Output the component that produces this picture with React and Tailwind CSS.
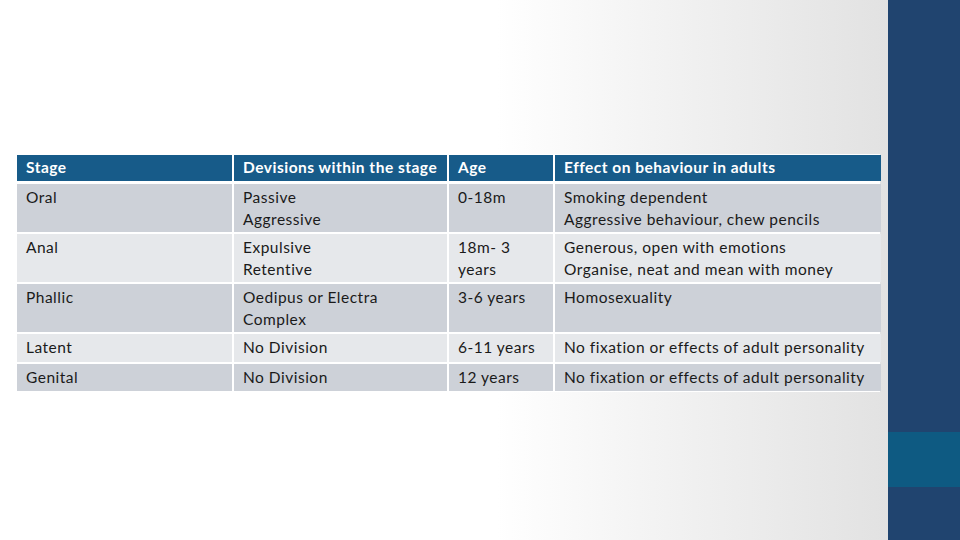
const rows = [
  { stage: "Oral", div: ["Passive", "Aggressive"], age: ["0-18m"], effect: ["Smoking dependent", "Aggressive behaviour, chew pencils"], tall: true },
  { stage: "Anal", div: ["Expulsive", "Retentive"], age: ["18m- 3", "years"], effect: ["Generous, open with emotions", "Organise, neat and mean with money"], tall: true },
  { stage: "Phallic", div: ["Oedipus or Electra", "Complex"], age: ["3-6 years"], effect: ["Homosexuality"], tall: true },
  { stage: "Latent", div: ["No Division"], age: ["6-11 years"], effect: ["No fixation or effects of adult personality"] },
  { stage: "Genital", div: ["No Division"], age: ["12 years"], effect: ["No fixation or effects of adult personality"] },
];

function Cell({ lines, shade, tall, last }) {
  return (
    <div
      className={`${shade} ${tall ? "h-[48px]" : last ? "h-[27px]" : "h-[28px]"} pl-[9px] pt-[3px] leading-[21.5px]`}
    >
      {lines.map((l) => (
        <div key={l}>{l}</div>
      ))}
    </div>
  );
}

export default function App() {
  return (
    <div className="w-[960px] h-[540px] flex overflow-hidden text-[15.5px] tracking-[0.5px] text-[#1a1a1a]" style={{ fontFamily: "Lato, 'Open Sans', sans-serif" }}>
      <div className="w-[888px] h-full bg-[linear-gradient(90deg,#ffffff_0%,#ffffff_56%,#f4f4f4_72%,#e2e2e2_100%)]">
        <div className="ml-[16px] mt-[154px] w-[864px] bg-white p-[1px]">
          <div className="grid grid-cols-[215px_213px_104px_326px] gap-x-[2px]">
            <div className="bg-[#175b89] h-[26px] pl-[9px] flex items-center font-bold text-white">Stage</div>
            <div className="bg-[#175b89] h-[26px] pl-[9px] flex items-center font-bold text-white">Devisions within the stage</div>
            <div className="bg-[#175b89] h-[26px] pl-[9px] flex items-center font-bold text-white">Age</div>
            <div className="bg-[#175b89] h-[26px] pl-[9px] flex items-center font-bold text-white">Effect on behaviour in adults</div>
          </div>
          <div className="h-[3px]" />
          <div className="flex flex-col gap-y-[2px]">
            {rows.map((r, i) => {
              const shade = i % 2 === 0 ? "bg-[#cdd1d8]" : "bg-[#e6e8eb]";
              const last = i === rows.length - 1;
              return (
                <div key={r.stage} className="grid grid-cols-[215px_213px_104px_326px] gap-x-[2px]">
                  <Cell lines={[r.stage]} shade={shade} tall={r.tall} last={last} />
                  <Cell lines={r.div} shade={shade} tall={r.tall} last={last} />
                  <Cell lines={r.age} shade={shade} tall={r.tall} last={last} />
                  <Cell lines={r.effect} shade={shade} tall={r.tall} last={last} />
                </div>
              );
            })}
          </div>
        </div>
      </div>
      <div className="w-[72px] h-full flex flex-col bg-[#20446f]">
        <div className="h-[432px]" />
        <div className="h-[55px] bg-[#0e5a82]" />
      </div>
    </div>
  );
}
